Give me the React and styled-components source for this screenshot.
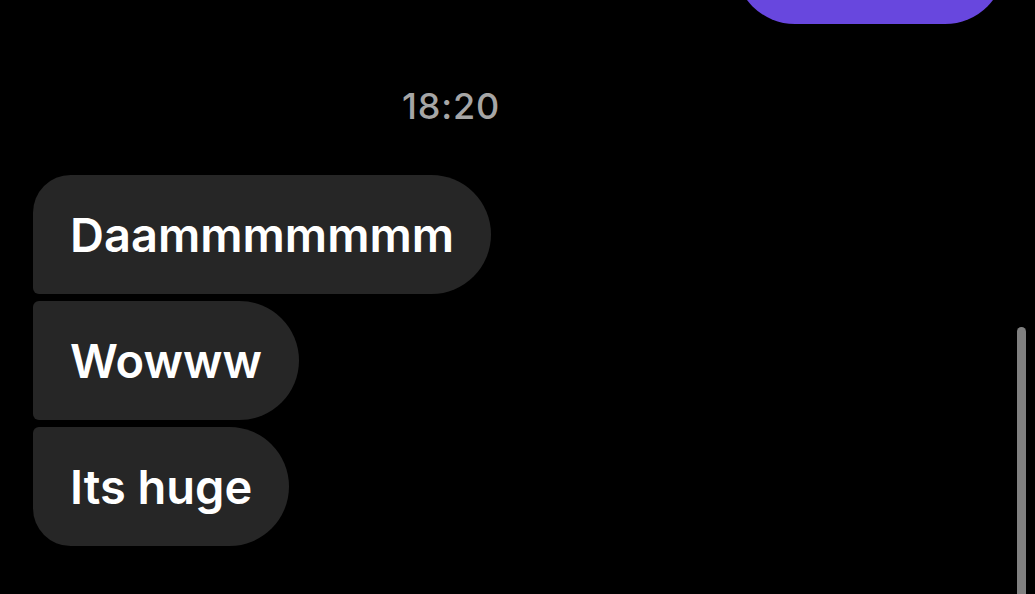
import React from 'react';
import styled, { createGlobalStyle } from 'styled-components';

const GlobalStyle = createGlobalStyle`
  html, body {
    margin: 0;
    padding: 0;
    background: #000;
    height: 100%;
    overflow: hidden;
  }
  body {
    font-family: Inter, "Noto Sans", "Liberation Sans", sans-serif;
    -webkit-font-smoothing: antialiased;
  }
`;

const Screen = styled.div`
  position: relative;
  width: 1035px;
  height: 594px;
  overflow: hidden;
  background: #000;
`;

const Thread = styled.div`
  display: flex;
  flex-direction: column;
  padding: 0 30px 0 33px;
`;

const OutgoingBubble = styled.div`
  align-self: flex-end;
  width: 270px;
  height: 120px;
  margin-top: -96px;
  border-radius: 60px;
  background: #6847de;
`;

const Timestamp = styled.div`
  margin: 62px 0 49px;
  padding-right: 136px;
  text-align: center;
  font-size: 36px;
  font-weight: 500;
  letter-spacing: 0.8px;
  line-height: 40px;
  color: #a6a6a6;
`;

const Group = styled.div`
  display: flex;
  flex-direction: column;
  align-items: flex-start;
  gap: 7px;
`;

const radii = {
  first: '38px 60px 60px 6px',
  middle: '6px 60px 60px 6px',
  last: '6px 60px 60px 38px',
};

const Bubble = styled.div`
  padding: 30px 37px;
  border-radius: ${(p) => radii[p.pos]};
  background: #262626;
  color: #fff;
  font-size: 47px;
  font-weight: 600;
  line-height: 59px;
  white-space: nowrap;
`;

const Scrollbar = styled.div`
  position: absolute;
  right: 9px;
  top: 327px;
  bottom: -10px;
  width: 9px;
  border-radius: 5px;
  background: #808080;
`;

const messages = ['Daammmmmmm', 'Wowww', 'Its huge'];

export default function App() {
  return (
    <Screen>
      <GlobalStyle />
      <Thread>
        <OutgoingBubble />
        <Timestamp>18:20</Timestamp>
        <Group>
          {messages.map((m, i) => (
            <Bubble
              key={i}
              pos={i === 0 ? 'first' : i === messages.length - 1 ? 'last' : 'middle'}
            >
              {m}
            </Bubble>
          ))}
        </Group>
      </Thread>
      <Scrollbar />
    </Screen>
  );
}
